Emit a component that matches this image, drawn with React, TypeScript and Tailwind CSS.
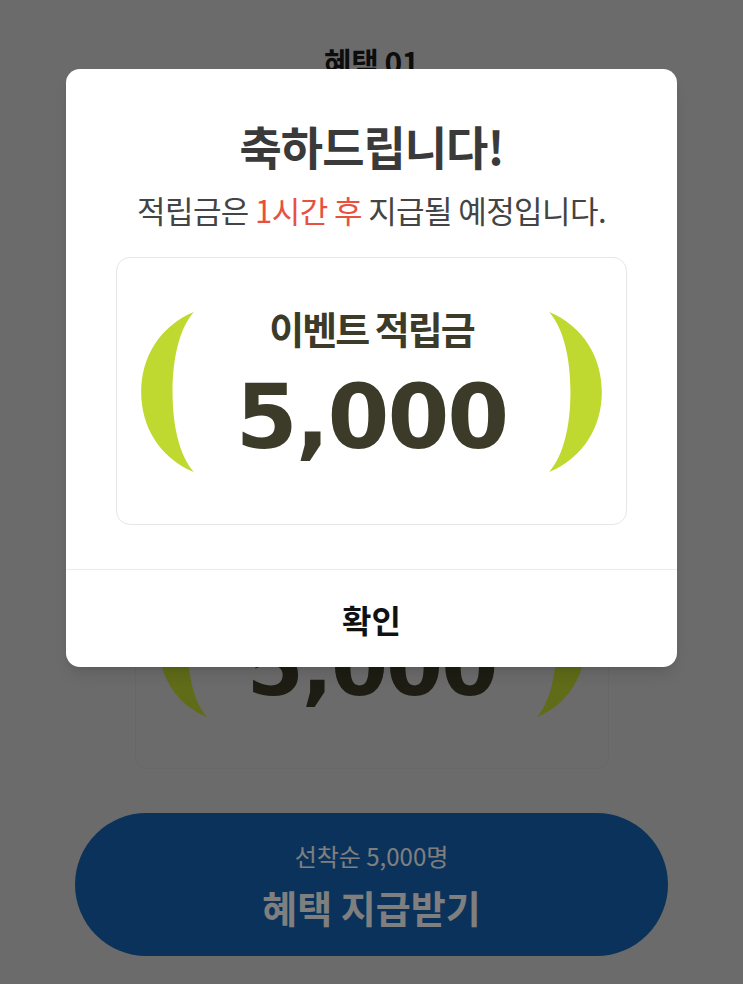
const font = { fontFamily: '"Noto Sans CJK KR", "Noto Sans", sans-serif' }
const numFont = { fontFamily: '"DejaVu Sans", "Noto Sans", sans-serif' }

function Bracket({ flip = false, className = '' }: { flip?: boolean; className?: string }) {
  return (
    <svg viewBox="0 0 54 158" className={className} style={flip ? { transform: 'scaleX(-1)' } : undefined}>
      <path
        d="M53 0 C 19 14, 1 45, 1 79 C 1 113, 19 144, 53 158 C 39 142, 32 113, 32 79 C 32 45, 39 16, 53 0 Z"
        fill="#c0d930"
      />
    </svg>
  )
}

function RewardCard({ small = false }: { small?: boolean }) {
  return (
    <div
      className={
        small
          ? 'w-[474px] h-[250px] rounded-[12px] border border-[#cfcfcf] flex items-center justify-between px-[22px]'
          : 'w-[511px] h-[268px] rounded-[14px] border border-[#e6e6e6] bg-white flex items-center justify-between px-[23px]'
      }
    >
      <Bracket className={small ? 'w-[50px] h-[148px]' : 'w-[55px] h-[160px] mt-[1px]'} />
      <div className={small ? 'flex flex-col items-center -mt-[8px]' : 'flex flex-col items-center -mt-[10px]'}>
        <div
          className={
            small
              ? 'text-[35px] leading-[42px] font-bold tracking-[-2px] text-[#3c3a28]'
              : 'text-[38px] leading-[46px] font-bold tracking-[-2px] text-[#3c3a28]'
          }
          style={font}
        >
          이벤트 적립금
        </div>
        <div
          className={
            small
              ? 'mt-[12px] text-[82px] leading-[92px] font-bold tracking-[-2px] text-[#3c3a28]'
              : 'mt-[16px] text-[89px] leading-[100px] font-bold tracking-[-2px] text-[#3c3a28]'
          }
          style={numFont}
        >
          5,000
        </div>
      </div>
      <Bracket flip className={small ? 'w-[50px] h-[148px]' : 'w-[55px] h-[160px] mt-[1px]'} />
    </div>
  )
}

export default function App() {
  return (
    <div className="relative w-[743px] h-[984px] overflow-hidden bg-[#d6d6d6]" style={font}>
      {/* page underneath */}
      <div className="flex flex-col items-center pt-[40px]">
        <h2 className="text-[30px] leading-[42px] font-bold tracking-[-0.5px] text-[#1a1a1a]">혜택 01</h2>
        <p className="mt-[40px] text-[22px] leading-[34px] text-[#444] text-center">
          이벤트 기간 동안 참여하신 모든 분께
          <br />
          적립금을 드립니다.
        </p>
        <div className="mt-[329px]">
          <RewardCard small />
        </div>
        <button className="mt-[44px] w-[593px] h-[143px] rounded-full bg-[#1565b5] flex flex-col items-center justify-center gap-[12px] text-white">
          <span className="text-[24px] leading-[32px]">선착순 5,000명</span>
          <span className="text-[38px] leading-[46px] font-bold">혜택 지급받기</span>
        </button>
      </div>

      {/* dim + modal */}
      <div className="absolute inset-0 bg-black/50 flex justify-center pt-[69px]">
        <div className="w-[611px] h-[598px] rounded-[14px] bg-white flex flex-col shadow-lg">
          <div className="flex flex-col items-center pt-[48px] px-[50px]">
            <h1 className="text-[46px] leading-[56px] font-bold text-[#3a3a3a] tracking-[-1px]">축하드립니다!</h1>
            <p className="mt-[18px] text-[31px] leading-[38px] text-[#444] tracking-[-0.6px]">
              적립금은 <span className="text-[#e8513f]">1시간 후</span> 지급될 예정입니다.
            </p>
            <div className="mt-[28px]">
              <RewardCard />
            </div>
          </div>
          <div className="mt-auto h-[98px] border-t border-[#ececec] flex items-center justify-center">
            <span className="text-[32px] font-bold text-[#111]">확인</span>
          </div>
        </div>
      </div>
    </div>
  )
}
